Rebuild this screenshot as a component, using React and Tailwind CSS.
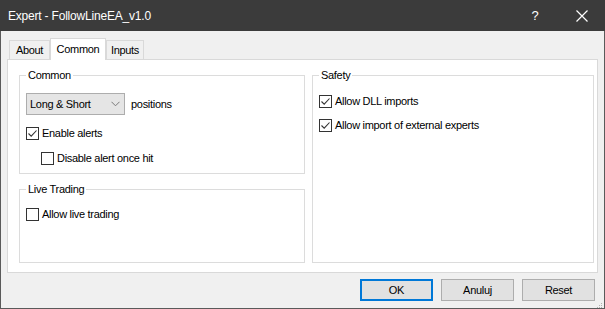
import React from "react";

function Check({ checked }) {
  return (
    <span className="w-[13px] h-[13px] border border-[#333333] bg-white flex items-center justify-center shrink-0">
      {checked && (
        <svg width="11" height="11" viewBox="0 0 11 11">
          <path d="M1.5 5.5 L4.2 8.2 L9.5 2.5" fill="none" stroke="#333333" strokeWidth="1.1" />
        </svg>
      )}
    </span>
  );
}

function CheckRow({ checked, label, className = "" }) {
  return (
    <div className={"flex items-center gap-[3px] h-[13px] " + className}>
      <Check checked={checked} />
      <span className="leading-[13px]">{label}</span>
    </div>
  );
}

function Group({ title, className = "", children }) {
  return (
    <fieldset className={"border border-[#dcdcdc] px-[6px] " + className}>
      <legend className="ml-0 px-[2px] leading-[13px] text-black">{title}</legend>
      {children}
    </fieldset>
  );
}

function Button({ children, primary }) {
  return (
    <button
      className={
        "w-[73px] h-[22px] bg-[#e1e1e1] flex items-center justify-center leading-none " +
        (primary ? "border-2 border-[#0078d7]" : "border border-[#adadad]")
      }
    >
      {children}
    </button>
  );
}

export default function App() {
  return (
    <div
      className="w-[605px] h-[309px] flex flex-col bg-[#f0f0f0] text-[11px] text-black tracking-[-0.3px]"
      style={{ fontFamily: '"Liberation Sans", Arial, sans-serif' }}
    >
      <div className="h-[31px] bg-[#3b3b3b] flex items-center text-white shrink-0 tracking-[-0.2px]">
        <span className="pl-[8px] text-[12px] flex-1">Expert - FollowLineEA_v1.0</span>
        <span className="text-[13px] w-[12px] mr-[35px] text-center">?</span>
        <svg width="12" height="12" viewBox="0 0 12 12" className="mr-[17px]">
          <path d="M0.5 0.5 L11.5 11.5 M11.5 0.5 L0.5 11.5" stroke="white" strokeWidth="1.2" />
        </svg>
      </div>
      <div className="flex-1 flex flex-col border-x border-b border-[#5a5a5a] px-[6px]">
        <div className="flex items-end h-[28px] pl-[2px]">
          <div className="h-[19px] w-[41px] border border-[#d9d9d9] border-b-0 bg-[#f0f0f0] flex items-center justify-center">
            About
          </div>
          <div className="h-[22px] w-[56px] border border-[#d9d9d9] border-b-0 bg-white flex items-center justify-center -mb-px relative z-10">
            Common
          </div>
          <div className="h-[19px] w-[38px] border border-[#d9d9d9] border-b-0 bg-[#f0f0f0] flex items-center justify-center">
            Inputs
          </div>
        </div>
        <div className="h-[214px] border border-[#d9d9d9] bg-white flex gap-[7px] pl-[11px] pr-[3px] pt-[9px]">
          <div className="w-[286px] flex flex-col gap-[9px]">
            <Group title="Common" className="h-[105px]">
              <div className="flex items-center mt-[11px]">
                <div className="w-[99px] h-[22px] bg-[#e5e5e5] border border-[#adadad] flex items-center pl-[3px]">
                  <span className="flex-1">Long &amp; Short</span>
                  <svg width="9" height="6" viewBox="0 0 9 6" className="mr-[4px]">
                    <path d="M0.5 0.8 L4.5 4.8 L8.5 0.8" fill="none" stroke="#7a7a7a" strokeWidth="1" />
                  </svg>
                </div>
                <span className="ml-[6px]">positions</span>
              </div>
              <CheckRow checked label="Enable alerts" className="mt-[12px]" />
              <CheckRow label="Disable alert once hit" className="mt-[12px] ml-[15px]" />
            </Group>
            <Group title="Live Trading" className="h-[80px]">
              <CheckRow label="Allow live trading" className="mt-[12px]" />
            </Group>
          </div>
          <Group title="Safety" className="w-[282px] h-[194px]">
            <CheckRow checked label="Allow DLL imports" className="mt-[13px]" />
            <CheckRow checked label="Allow import of external experts" className="mt-[11px]" />
          </Group>
        </div>
        <div className="flex justify-end gap-[8px] pt-[6px] pr-[3px] relative">
          <Button primary>OK</Button>
          <Button>Anuluj</Button>
          <Button>Reset</Button>
          <svg width="6" height="6" viewBox="0 0 6 6" className="absolute right-[-5px] bottom-[-8px]">
            <rect x="4" y="0" width="1" height="1" fill="#b0b0b0" />
            <rect x="2" y="2" width="1" height="1" fill="#b0b0b0" />
            <rect x="4" y="2" width="1" height="1" fill="#b0b0b0" />
            <rect x="0" y="4" width="1" height="1" fill="#b0b0b0" />
            <rect x="2" y="4" width="1" height="1" fill="#b0b0b0" />
            <rect x="4" y="4" width="1" height="1" fill="#b0b0b0" />
          </svg>
        </div>
      </div>
    </div>
  );
}
